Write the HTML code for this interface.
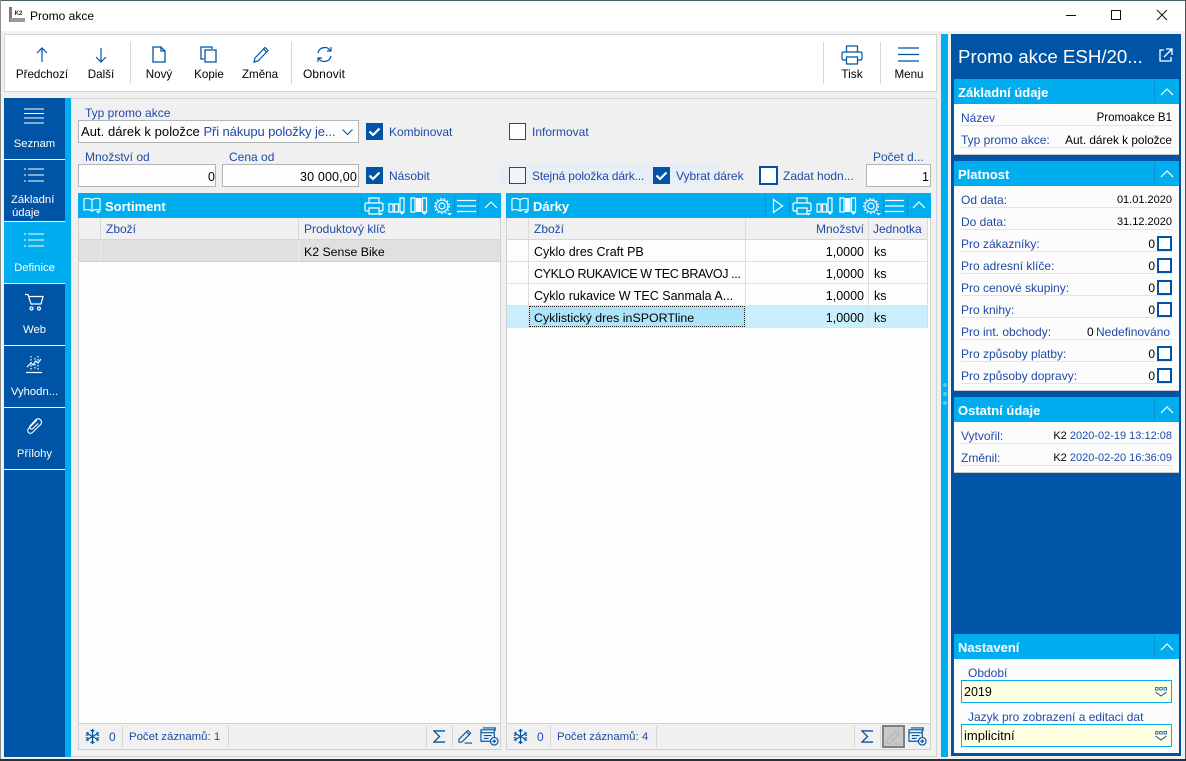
<!DOCTYPE html>
<html lang="cs">
<head>
<meta charset="utf-8">
<title>Promo akce</title>
<style>
html,body{margin:0;padding:0}
body{width:1186px;height:761px;position:relative;overflow:hidden;background:#f0f0f0;font-family:"Liberation Sans",sans-serif;font-size:12px;color:#000}
div,svg{position:absolute;box-sizing:border-box}
.t{white-space:nowrap;line-height:16px;height:16px}
.b{color:#1f4aa8}
.w{color:#fff}
.r{text-align:right}
.c{text-align:center}
.bold{font-weight:bold;color:#fff;font-size:13px}
.inp{background:#fdfdfd;border:1px solid #b4b4b4}
.cb{width:17px;height:17px;border:1.5px solid #0054a6;background:#fff}
.cbt{border:2px solid #0054a6;background:#fff}
.cbon{background:#0054a6}
.ln{background:#d6d6d6}
.ul{background:#e4e4e4;height:1px;left:961px;width:211px}
.nav{font-size:11.3px}
.tb{font-size:11.6px}
.d{font-size:11px}
.rec{font-size:11.4px}
svg{overflow:visible;fill:none;stroke:#0054a6;stroke-width:1.2}
svg.wh{stroke:#fff}
</style>
</head>
<body>
<svg width="0" height="0" style="left:0;top:0">
<defs>
<symbol id="print" viewBox="0 0 20 19"><path d="M5 6V1h10v5M5 14H2.500C1.500 14 1 13.500 1 12.500V7.500C1 6.500 1.500 6 2.500 6h15c1 0 1.500.5 1.500 1.500v5c0 1-.5 1.500-1.500 1.500H15M5 11h10v6H5z"/><path d="M14 16h5l-2.500 2.500z" fill="#fff" stroke="none"/></symbol>
<symbol id="cols" viewBox="0 0 18 19"><path d="M1 7h4v8H1zM6.500 7h4v8h-4zM12 1h4v14h-4z"/><path d="M11.500 15h5L14 18z" fill="#fff" stroke="none"/></symbol>
<symbol id="bars" viewBox="0 0 18 19"><path d="M1 1h4v14H1zM12.500 1h4v14h-4z"/><path d="M6 1h5.500v14H6z" fill="#fff" stroke="none"/><path d="M12 15h5l-2.500 3z" fill="#fff" stroke="none"/></symbol>
<symbol id="gear" viewBox="0 0 18 18"><circle cx="8" cy="8" r="6"/><circle cx="8" cy="8" r="3"/><circle cx="8" cy="8" r="7.500" stroke-dasharray="1.500 2.200" stroke-width="1.200"/><path d="M13 15h5l-2.500 2.500z" fill="#fff" stroke="none"/></symbol>
<symbol id="book" viewBox="0 0 20 18"><path d="M9.500 3C7 1 4 1 1 2v12c3-1 6-1 8.500 1 2.500-2 5.500-2 8.500-1V2c-3-1-6-1-8.500 1zM9.500 3v12"/><path d="M13.500 15h5L16 17.500z" fill="#fff" stroke="none"/></symbol>
<symbol id="snow" viewBox="0 0 16 16"><path d="M8 0v16M1 4l14 8M15 4L1 12M6 1l2 2 2-2M6 15l2-2 2 2M1 7l2.500-1L3 3M15 9l-2.500 1 .5 3M15 7l-2.500-1L13 3M1 9l2.500 1L3 13"/></symbol>
<symbol id="sum" viewBox="0 0 14 14"><path d="M13 1H1l6 6-6 6h12" stroke-width="1.400"/></symbol>
<symbol id="pen" viewBox="0 0 16 16"><path d="M1 11L10.500 1.500l3 3L4 14H1zM9 3l3 3M7 15h8"/></symbol>
<symbol id="add" viewBox="0 0 20 20"><path d="M3 1h13v3M1 3h14v12H1zM1 6h14M4 9h8M4 12h5"/><circle cx="15" cy="15" r="4" fill="#f0f0f0"/><path d="M13 15h4M15 13v4"/></symbol>
<symbol id="drop" viewBox="0 0 12 10"><path d="M.5.500h2.500v2.500H.5zM4.700.500h2.500v2.500H4.700zM9 .5h2.500v2.500H9z" stroke-width=".8"/><path d="M.5 5l5.500 4 5.500-4" stroke-width="1"/></symbol>
<symbol id="check" viewBox="0 0 17 17"><path d="M3.500 8.500l3.500 3.500 6.500-6.500" stroke="#fff" stroke-width="2.200"/></symbol>
<symbol id="up" viewBox="0 0 14 8"><path d="M1 7l6-6 6 6" stroke="#fff" stroke-width="1.200"/></symbol>
<symbol id="list" viewBox="0 0 20 14"><path d="M4 1h16M4 7h16M4 13h16M0 1h2M0 7h2M0 13h2" stroke="#fff" stroke-width="1"/></symbol>
</defs>
</svg>

<!-- window frame -->
<div style="left:0;top:0;width:1186px;height:1px;background:#4a5f68"></div>
<div style="left:0;top:1px;width:1186px;height:30px;background:#fff"></div>
<div style="left:0;top:0;width:1px;height:761px;background:#8d8d8d"></div>
<div style="left:1185px;top:0;width:1px;height:761px;background:#555"></div>
<div style="left:0;top:759px;width:1186px;height:2px;background:#26313a"></div>
<div style="left:9px;top:7px;width:3px;height:15px;background:#7a7a7a"></div>
<div style="left:12px;top:11px;width:13px;height:7px;background:#fff;font:bold 6px/7px 'Liberation Sans',sans-serif;text-align:center;color:#222">K2</div>
<div style="left:10px;top:18px;width:15px;height:4px;background:#9a9a9a"></div>
<div class="t" style="left:30px;top:8px">Promo akce</div>
<svg style="left:1066px;top:15px" width="10" height="1"><path d="M0 .5h10" stroke="#111" stroke-width="1"/></svg>
<svg style="left:1111px;top:10px" width="10" height="10"><rect x=".5" y=".5" width="9" height="9" stroke="#111" stroke-width="1"/></svg>
<svg style="left:1157px;top:10px" width="10" height="10"><path d="M0 0l10 10M10 0L0 10" stroke="#111" stroke-width="1"/></svg>

<!-- toolbar -->
<div style="left:4px;top:34px;width:933px;height:58px;background:#fff;border:1px solid #d4d4d4"></div>
<div class="ln" style="left:130px;top:42px;width:1px;height:42px"></div>
<div class="ln" style="left:291px;top:42px;width:1px;height:42px"></div>
<div class="ln" style="left:823px;top:42px;width:1px;height:42px"></div>
<div class="ln" style="left:880px;top:42px;width:1px;height:42px"></div>

<svg style="left:36px;top:47px" width="12" height="16"><path d="M6 15V1M1 6l5-5 5 5"/></svg>
<svg style="left:95px;top:47px" width="12" height="16"><path d="M6 1v14M1 10l5 5 5-5"/></svg>
<svg style="left:152px;top:46px" width="14" height="17"><path d="M1 1h8l4 4v11H1zM9 1v4h4" stroke-width="1.300"/></svg>
<svg style="left:200px;top:46px" width="17" height="17"><path d="M12 3V1H1v12h3M5 4h11v12H5z" stroke-width="1.300"/></svg>
<svg style="left:253px;top:46px" width="16" height="17"><path d="M1 16l1-4L12 1.500l3 3L5 15zM10.500 3l3 3"/></svg>
<svg style="left:316px;top:46px" width="17" height="17"><path d="M2 7C3 3 6 1.500 9 1.500c2 0 4 1 5 3M15 1v4h-4M15 10c-1 4-4 5.500-7 5.500-2 0-4-1-5-3M2 16v-4h4"/></svg>
<svg style="left:841px;top:45px" width="22" height="20"><path d="M5.500 7V1h11v6M5.500 15H2.500C1.500 15 1 14.500 1 13.500V8.500C1 7.500 1.500 7 2.500 7h17c1 0 1.500.5 1.500 1.500v5c0 1-.5 1.500-1.500 1.500h-3M5.500 12h11v7h-11z"/></svg>
<svg style="left:898px;top:47px" width="21" height="15"><path d="M0 1h21M0 7.500h21M0 14h21"/></svg>

<div class="t c tb" style="left:12px;top:67px;width:60px">Předchozí</div>
<div class="t c tb" style="left:81px;top:67px;width:40px">Další</div>
<div class="t c tb" style="left:139px;top:67px;width:40px">Nový</div>
<div class="t c tb" style="left:189px;top:67px;width:40px">Kopie</div>
<div class="t c tb" style="left:235px;top:67px;width:50px">Změna</div>
<div class="t c" style="left:299px;top:66px;width:50px;letter-spacing:.1px">Obnovit</div>
<div class="t c" style="left:832px;top:66px;width:40px">Tisk</div>
<div class="t c tb" style="left:888px;top:67px;width:42px">Menu</div>

<!-- left nav -->
<div style="left:4px;top:98px;width:61px;height:659px;background:#0054a6"></div>
<div style="left:65px;top:98px;width:6px;height:659px;background:#00aeef"></div>
<div style="left:4px;top:222px;width:61px;height:62px;background:#00aeef"></div>
<div style="left:4px;top:159px;width:61px;height:1px;background:#fff"></div>
<div style="left:4px;top:221px;width:61px;height:1px;background:#fff"></div>
<div style="left:4px;top:283px;width:61px;height:1px;background:#fff"></div>
<div style="left:4px;top:345px;width:61px;height:1px;background:#fff"></div>
<div style="left:4px;top:407px;width:61px;height:1px;background:#fff"></div>
<div style="left:4px;top:469px;width:61px;height:1px;background:#fff"></div>

<svg class="wh" style="left:24px;top:108px" width="20" height="16"><path d="M0 1h20M0 5.500h20M0 10h20M0 15h20" stroke-width="1"/></svg>
<div class="t c w nav" style="left:4px;top:136px;width:61px">Seznam</div>
<svg style="left:24px;top:168px" width="20" height="14"><use href="#list" width="20" height="14"/></svg>
<div class="t w nav" style="left:11px;top:192px">Základní</div>
<div class="t w nav" style="left:12px;top:205px">údaje</div>
<svg style="left:24px;top:233px" width="20" height="14"><use href="#list" width="20" height="14"/></svg>
<div class="t c w nav" style="left:4px;top:260px;width:61px">Definice</div>
<svg class="wh" style="left:25px;top:294px" width="19" height="17"><path d="M0 .5h3l3 9.500h10L18 2.500H4"/><circle cx="6.500" cy="14.500" r="1.500"/><circle cx="14" cy="14.500" r="1.500"/></svg>
<div class="t c w nav" style="left:4px;top:322px;width:61px">Web</div>
<svg class="wh" style="left:26px;top:355px" width="17" height="18" stroke-width="1"><path d="M1 12l4-4 2 2 3-4 2 2 3-4M0 17.500h16"/><path d="M5 1v14M9 3v12M12 1v14" stroke-dasharray="1.500 1.500"/></svg>
<div class="t c w nav" style="left:4px;top:384px;width:61px">Vyhodn...</div>
<svg class="wh" style="left:26px;top:417px" width="17" height="19"><path d="M11 3L3 11C0 14 3 18 6.500 15.500L15 7C17 4 13 0 10 2.500L4 9C2.500 11 5 13 7 11.500L12 6.500" stroke-width="1.100"/></svg>
<div class="t c w nav" style="left:4px;top:446px;width:61px">Přílohy</div>

<!-- main panel -->
<div style="left:71px;top:98px;width:866px;height:659px;background:#f0f0f0;border:1px solid #d4d4d4;border-left:none"></div>

<div class="t b" style="left:85px;top:105px">Typ promo akce</div>
<div class="inp" style="left:78px;top:120px;width:281px;height:23px"></div>
<div class="t" style="left:81px;top:124px;font-size:13px;letter-spacing:.05px">Aut. dárek k položce <span class="b" style="letter-spacing:-.1px">Při nákupu položky je...</span></div>
<svg style="left:342px;top:129px" width="11" height="6"><path d="M.5.500l5 5 5-5" stroke-width="1"/></svg>

<div class="cb cbon" style="left:366px;top:123px"><svg style="left:-1.500px;top:-1.500px" width="17" height="17"><use href="#check" width="17" height="17"/></svg></div>
<div class="t b" style="left:389px;top:124px">Kombinovat</div>
<div class="cb" style="left:509px;top:123px"></div>
<div class="t b" style="left:532px;top:124px">Informovat</div>

<div class="t b" style="left:85px;top:149px">Množství od</div>
<div class="t b" style="left:229px;top:149px">Cena od</div>
<div class="t b" style="left:873px;top:149px">Počet d...</div>
<div class="inp" style="left:78px;top:164px;width:138px;height:23px"></div>
<div class="t r" style="left:78px;top:169px;width:137px;font-size:12.500px">0</div>
<div class="inp" style="left:222px;top:164px;width:137px;height:23px"></div>
<div class="t r" style="left:222px;top:169px;width:135px;font-size:12.500px;letter-spacing:.15px">30 000,00</div>
<div class="inp" style="left:866px;top:164px;width:65px;height:23px"></div>
<div class="t r" style="left:866px;top:169px;width:63px;font-size:12.500px">1</div>

<div class="cb cbon" style="left:366px;top:167px"><svg style="left:-1.500px;top:-1.500px" width="17" height="17"><use href="#check" width="17" height="17"/></svg></div>
<div class="t b" style="left:389px;top:168px">Násobit</div>
<div style="left:499px;top:163px;width:223px;height:22px;background:#e8eef5"></div>
<div class="cb" style="left:509px;top:167px;background:#f0f5fa"></div>
<div class="t b" style="left:532px;top:168px;letter-spacing:-.15px">Stejná položka dárk...</div>
<div class="cb cbon" style="left:653px;top:167px"><svg style="left:-1.500px;top:-1.500px" width="17" height="17"><use href="#check" width="17" height="17"/></svg></div>
<div class="t b" style="left:676px;top:168px">Vybrat dárek</div>
<div class="cbt" style="left:759px;top:166px;width:19px;height:19px"></div>
<div class="t b" style="left:783px;top:168px">Zadat hodn...</div>

<!-- Sortiment panel -->
<div style="left:78px;top:218px;width:423px;height:532px;background:#fdfdfd;border:1px solid #d0d0d0;border-top:none"></div>
<div style="left:78px;top:193px;width:423px;height:25px;background:#00aeef"></div>
<svg class="wh" style="left:83px;top:197px" width="19" height="17"><use href="#book" width="19" height="17"/></svg>
<div class="t bold" style="left:105px;top:199px">Sortiment</div>
<div style="left:361px;top:195px;width:1px;height:21px;background:#0a8fd0"></div>
<svg class="wh" style="left:364px;top:197px" width="20" height="19"><use href="#print" width="20" height="19"/></svg>
<svg class="wh" style="left:388px;top:197px" width="18" height="19"><use href="#cols" width="18" height="19"/></svg>
<svg class="wh" style="left:410px;top:197px" width="18" height="19"><use href="#bars" width="18" height="19"/></svg>
<svg class="wh" style="left:434px;top:198px" width="18" height="18"><use href="#gear" width="18" height="18"/></svg>
<div style="left:454px;top:195px;width:1px;height:21px;background:#0a8fd0"></div>
<svg class="wh" style="left:457px;top:200px" width="19" height="12"><path d="M0 .5h19M0 6h19M0 11.500h19"/></svg>
<div style="left:478px;top:195px;width:1px;height:21px;background:#0a8fd0"></div>
<svg style="left:484px;top:201px" width="14" height="8"><use href="#up" width="14" height="8"/></svg>

<div style="left:79px;top:218px;width:421px;height:22px;background:#f0f0f0;border-bottom:1px solid #d6d6d6"></div>
<div class="ln" style="left:100px;top:218px;width:1px;height:44px"></div>
<div class="ln" style="left:298px;top:218px;width:1px;height:44px"></div>
<div class="t b" style="left:106px;top:221px">Zboží</div>
<div class="t b" style="left:304px;top:221px">Produktový klíč</div>
<div style="left:79px;top:240px;width:421px;height:22px;background:#e0e0e0;border-bottom:1px solid #d0d0d0"></div>
<div class="ln" style="left:100px;top:240px;width:1px;height:22px;background:#ececec"></div>
<div class="ln" style="left:298px;top:240px;width:1px;height:22px;background:#ececec"></div>
<div class="t" style="left:304px;top:244px;font-size:12.300px">K2 Sense Bike</div>

<div style="left:79px;top:723px;width:421px;height:26px;background:#f0f0f0;border-top:1px solid #d0d0d0"></div>
<svg style="left:85px;top:729px" width="15" height="15"><use href="#snow" width="15" height="15"/></svg>
<div class="t b" style="left:109px;top:729px">0</div>
<div class="ln" style="left:122px;top:726px;width:1px;height:21px"></div>
<div class="t b rec" style="left:129px;top:729px">Počet záznamů: 1</div>
<div class="ln" style="left:228px;top:726px;width:1px;height:21px"></div>
<div class="ln" style="left:426px;top:726px;width:1px;height:21px"></div>
<svg style="left:433px;top:730px" width="13" height="13"><use href="#sum" width="13" height="13"/></svg>
<div class="ln" style="left:452px;top:726px;width:1px;height:21px"></div>
<svg style="left:458px;top:729px" width="15" height="15"><use href="#pen" width="15" height="15"/></svg>
<svg style="left:480px;top:727px" width="19" height="19"><use href="#add" width="19" height="19"/></svg>

<!-- Dárky panel -->
<div style="left:506px;top:218px;width:425px;height:532px;background:#fdfdfd;border:1px solid #d0d0d0;border-top:none"></div>
<div style="left:506px;top:193px;width:425px;height:25px;background:#00aeef"></div>
<svg class="wh" style="left:511px;top:197px" width="19" height="17"><use href="#book" width="19" height="17"/></svg>
<div class="t bold" style="left:533px;top:199px">Dárky</div>
<div style="left:765px;top:195px;width:1px;height:21px;background:#0a8fd0"></div>
<svg class="wh" style="left:773px;top:199px" width="10" height="14"><path d="M.5.500l9 6.500-9 6.500z"/></svg>
<div style="left:789px;top:195px;width:1px;height:21px;background:#0a8fd0"></div>
<svg class="wh" style="left:792px;top:197px" width="20" height="19"><use href="#print" width="20" height="19"/></svg>
<svg class="wh" style="left:816px;top:197px" width="18" height="19"><use href="#cols" width="18" height="19"/></svg>
<svg class="wh" style="left:839px;top:197px" width="18" height="19"><use href="#bars" width="18" height="19"/></svg>
<svg class="wh" style="left:863px;top:198px" width="18" height="18"><use href="#gear" width="18" height="18"/></svg>
<div style="left:883px;top:195px;width:1px;height:21px;background:#0a8fd0"></div>
<svg class="wh" style="left:885px;top:200px" width="19" height="12"><path d="M0 .5h19M0 6h19M0 11.500h19"/></svg>
<div style="left:907px;top:195px;width:1px;height:21px;background:#0a8fd0"></div>
<svg style="left:912px;top:201px" width="14" height="8"><use href="#up" width="14" height="8"/></svg>

<div style="left:507px;top:218px;width:421px;height:22px;background:#f0f0f0"></div>
<div class="ln" style="left:507px;top:239px;width:421px;height:1px"></div>
<div class="ln" style="left:507px;top:261px;width:421px;height:1px;background:#e0e0e0"></div>
<div class="ln" style="left:507px;top:283px;width:421px;height:1px;background:#e0e0e0"></div>
<div class="ln" style="left:507px;top:305px;width:421px;height:1px;background:#e0e0e0"></div>
<div style="left:507px;top:306px;width:421px;height:21px;background:#c9eefc"></div>
<div class="ln" style="left:507px;top:327px;width:421px;height:1px;background:#e0e0e0"></div>
<div style="left:529px;top:306px;width:216px;height:21px;background:#aee4fa;border:1px dotted #222"></div>
<div class="ln" style="left:528px;top:218px;width:1px;height:110px;background:#dcdcdc"></div>
<div class="ln" style="left:745px;top:218px;width:1px;height:110px;background:#dcdcdc"></div>
<div class="ln" style="left:868px;top:218px;width:1px;height:110px;background:#dcdcdc"></div>
<div class="ln" style="left:927px;top:218px;width:1px;height:110px;background:#dcdcdc"></div>
<div class="t b" style="left:534px;top:221px">Zboží</div>
<div class="t b r" style="left:750px;top:221px;width:114px">Množství</div>
<div class="t b" style="left:873px;top:221px">Jednotka</div>

<div class="t" style="left:534px;top:244px;font-size:12.500px">Cyklo dres Craft PB</div>
<div class="t" style="left:534px;top:266px;font-size:12.500px;letter-spacing:-.4px">CYKLO RUKAVICE W TEC BRAVOJ ...</div>
<div class="t" style="left:534px;top:288px;font-size:12.500px">Cyklo rukavice W TEC Sanmala A...</div>
<div class="t" style="left:534px;top:310px;font-size:12.400px">Cyklistický dres inSPORTline</div>
<div class="t r" style="left:750px;top:244px;width:114px;font-size:12.500px">1,0000</div>
<div class="t r" style="left:750px;top:266px;width:114px;font-size:12.500px">1,0000</div>
<div class="t r" style="left:750px;top:288px;width:114px;font-size:12.500px">1,0000</div>
<div class="t r" style="left:750px;top:310px;width:114px;font-size:12.500px">1,0000</div>
<div class="t" style="left:874px;top:244px;font-size:12.500px">ks</div>
<div class="t" style="left:874px;top:266px;font-size:12.500px">ks</div>
<div class="t" style="left:874px;top:288px;font-size:12.500px">ks</div>
<div class="t" style="left:874px;top:310px;font-size:12.500px">ks</div>

<div style="left:507px;top:723px;width:423px;height:26px;background:#f0f0f0;border-top:1px solid #d0d0d0"></div>
<svg style="left:513px;top:729px" width="15" height="15"><use href="#snow" width="15" height="15"/></svg>
<div class="t b" style="left:537px;top:729px">0</div>
<div class="ln" style="left:550px;top:726px;width:1px;height:21px"></div>
<div class="t b rec" style="left:557px;top:729px">Počet záznamů: 4</div>
<div class="ln" style="left:656px;top:726px;width:1px;height:21px"></div>
<div class="ln" style="left:854px;top:726px;width:1px;height:21px"></div>
<svg style="left:861px;top:730px" width="13" height="13"><use href="#sum" width="13" height="13"/></svg>
<div class="ln" style="left:880px;top:726px;width:1px;height:21px"></div>
<div style="left:882px;top:725px;width:23px;height:23px;background:#c8c8c8;border:2px solid #7f7f7f"></div>
<svg style="left:886px;top:729px;stroke:#b8b8b8" width="15" height="15"><path d="M1 11L10.500 1.500l3 3L4 14H1zM9 3l3 3M7 15h8"/></svg>
<svg style="left:908px;top:727px" width="19" height="19"><use href="#add" width="19" height="19"/></svg>

<!-- splitter -->
<div style="left:941px;top:34px;width:7px;height:723px;background:#00aeef"></div>
<div style="left:943px;top:383px;width:4px;height:4px;border-radius:2px;background:#57c8f2"></div>
<div style="left:943px;top:392px;width:4px;height:4px;border-radius:2px;background:#57c8f2"></div>
<div style="left:943px;top:401px;width:4px;height:4px;border-radius:2px;background:#57c8f2"></div>

<!-- right panel -->
<div style="left:951px;top:34px;width:230px;height:722px;background:#0054a6"></div>
<div class="t w" style="left:958px;top:45px;height:24px;line-height:24px;font-size:18.700px">Promo akce ESH/20...</div>
<svg class="wh" style="left:1159px;top:48px" width="14" height="14"><path d="M5 2H1v11h11V9M7 1h6v6M13 1L5 9" stroke-width="1.300"/></svg>

<!-- Základní údaje -->
<div style="left:954px;top:79px;width:225px;height:76px;background:#fcfcfc;border-bottom:1px solid #c8c8c8"></div>
<div style="left:954px;top:79px;width:225px;height:25px;background:#00aeef"></div>
<div class="t bold" style="left:958px;top:85px">Základní údaje</div>
<div style="left:1154px;top:81px;width:1px;height:21px;background:#0a8fd0"></div>
<svg style="left:1160px;top:88px" width="14" height="8"><use href="#up" width="14" height="8"/></svg>
<div class="t b" style="left:961px;top:110px">Název</div>
<div class="t r" style="left:1060px;top:110px;width:112px;font-size:11.500px">Promoakce B1</div>
<div class="ul" style="top:125px"></div>
<div class="t b" style="left:961px;top:132px">Typ promo akce:</div>
<div class="t r" style="left:1050px;top:132px;width:122px;font-size:11.800px">Aut. dárek k položce</div>
<div class="ul" style="top:147px"></div>

<!-- Platnost -->
<div style="left:954px;top:161px;width:225px;height:230px;background:#fcfcfc;border-bottom:1px solid #c8c8c8"></div>
<div style="left:954px;top:161px;width:225px;height:25px;background:#00aeef"></div>
<div class="t bold" style="left:958px;top:167px">Platnost</div>
<div style="left:1154px;top:163px;width:1px;height:21px;background:#0a8fd0"></div>
<svg style="left:1160px;top:170px" width="14" height="8"><use href="#up" width="14" height="8"/></svg>

<div class="t b" style="left:961px;top:192px">Od data:</div><div class="t r d" style="left:1072px;top:192px;width:100px">01.01.2020</div><div class="ul" style="top:207px"></div>
<div class="t b" style="left:961px;top:214px">Do data:</div><div class="t r d" style="left:1072px;top:214px;width:100px">31.12.2020</div><div class="ul" style="top:229px"></div>
<div class="t b" style="left:961px;top:236px">Pro zákazníky:</div><div class="t r" style="left:1124px;top:236px;width:31px">0</div><div class="cbt" style="left:1157px;top:236px;width:15px;height:15px"></div><div class="ul" style="top:251px"></div>
<div class="t b" style="left:961px;top:258px">Pro adresní klíče:</div><div class="t r" style="left:1124px;top:258px;width:31px">0</div><div class="cbt" style="left:1157px;top:258px;width:15px;height:15px"></div><div class="ul" style="top:273px"></div>
<div class="t b" style="left:961px;top:280px">Pro cenové skupiny:</div><div class="t r" style="left:1124px;top:280px;width:31px">0</div><div class="cbt" style="left:1157px;top:280px;width:15px;height:15px"></div><div class="ul" style="top:295px"></div>
<div class="t b" style="left:961px;top:302px">Pro knihy:</div><div class="t r" style="left:1124px;top:302px;width:31px">0</div><div class="cbt" style="left:1157px;top:302px;width:15px;height:15px"></div><div class="ul" style="top:317px"></div>
<div class="t b" style="left:961px;top:324px">Pro int. obchody:</div><div class="t" style="left:1087px;top:324px">0</div><div class="t b" style="left:1096px;top:324px">Nedefinováno</div><div class="ul" style="top:339px"></div>
<div class="t b" style="left:961px;top:346px">Pro způsoby platby:</div><div class="t r" style="left:1124px;top:346px;width:31px">0</div><div class="cbt" style="left:1157px;top:346px;width:15px;height:15px"></div><div class="ul" style="top:361px"></div>
<div class="t b" style="left:961px;top:368px">Pro způsoby dopravy:</div><div class="t r" style="left:1124px;top:368px;width:31px">0</div><div class="cbt" style="left:1157px;top:368px;width:15px;height:15px"></div><div class="ul" style="top:383px"></div>

<!-- Ostatní údaje -->
<div style="left:954px;top:397px;width:225px;height:76px;background:#fcfcfc;border-bottom:1px solid #c8c8c8"></div>
<div style="left:954px;top:397px;width:225px;height:25px;background:#00aeef"></div>
<div class="t bold" style="left:958px;top:403px">Ostatní údaje</div>
<div style="left:1154px;top:399px;width:1px;height:21px;background:#0a8fd0"></div>
<svg style="left:1160px;top:406px" width="14" height="8"><use href="#up" width="14" height="8"/></svg>
<div class="t b" style="left:961px;top:428px">Vytvořil:</div>
<div class="t r d" style="left:1030px;top:428px;width:142px"><span>K2</span> <span class="b">2020-02-19 13:12:08</span></div>
<div class="ul" style="top:443px"></div>
<div class="t b" style="left:961px;top:450px">Změnil:</div>
<div class="t r d" style="left:1030px;top:450px;width:142px"><span>K2</span> <span class="b">2020-02-20 16:36:09</span></div>
<div class="ul" style="top:465px"></div>

<!-- Nastavení -->
<div style="left:954px;top:634px;width:225px;height:119px;background:#fcfcfc"></div>
<div style="left:954px;top:634px;width:225px;height:25px;background:#00aeef"></div>
<div class="t bold" style="left:958px;top:640px">Nastavení</div>
<div style="left:1154px;top:636px;width:1px;height:21px;background:#0a8fd0"></div>
<svg style="left:1160px;top:643px" width="14" height="8"><use href="#up" width="14" height="8"/></svg>
<div class="t b" style="left:968px;top:665px">Období</div>
<div style="left:961px;top:680px;width:211px;height:23px;background:#ffffe1;border:1px solid #00aeef"></div>
<div class="t" style="left:964px;top:684px;font-size:12.500px">2019</div>
<svg style="left:1155px;top:687px" width="12" height="10"><use href="#drop" width="12" height="10"/></svg>
<div class="t b" style="left:968px;top:709px">Jazyk pro zobrazení a editaci dat</div>
<div style="left:961px;top:724px;width:211px;height:23px;background:#ffffe1;border:1px solid #00aeef"></div>
<div class="t" style="left:964px;top:728px;font-size:13px">implicitní</div>
<svg style="left:1155px;top:731px" width="12" height="10"><use href="#drop" width="12" height="10"/></svg>
</body>
</html>
